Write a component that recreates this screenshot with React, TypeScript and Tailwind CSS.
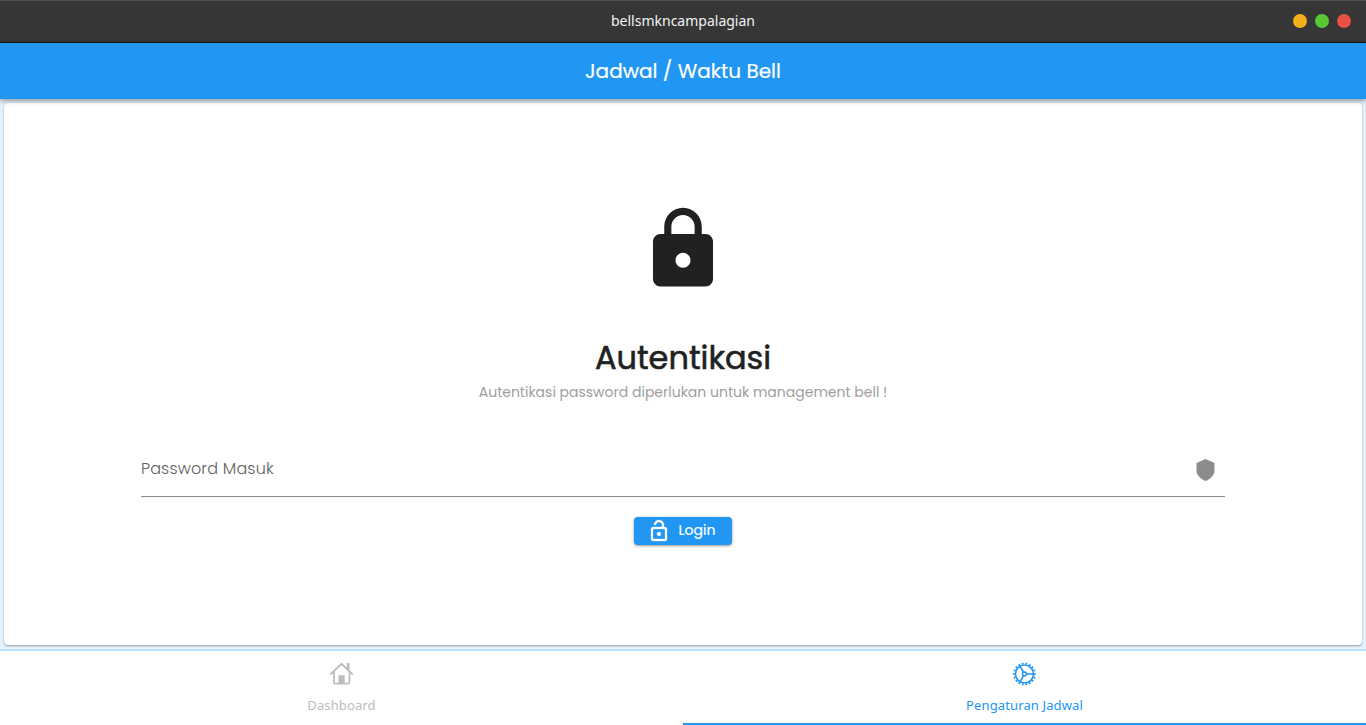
import React from "react";

const poppins = "font-['Poppins','Inter',sans-serif]";
const noto = "font-['Noto_Sans',sans-serif]";

function LockIcon() {
  return (
    <svg viewBox="0 0 24 24" className="size-[90px] fill-[#212121]">
      <path d="M18 8h-1V6c0-2.76-2.24-5-5-5S7 3.24 7 6v2H6c-1.1 0-2 .9-2 2v10c0 1.1.9 2 2 2h12c1.1 0 2-.9 2-2V10c0-1.1-.9-2-2-2zm-6 9c-1.1 0-2-.9-2-2s.9-2 2-2 2 .9 2 2-.9 2-2 2zm3.1-9H8.9V6c0-1.71 1.39-3.1 3.1-3.1 1.71 0 3.1 1.39 3.1 3.1v2z" />
    </svg>
  );
}

function LockOpenIcon() {
  return (
    <svg viewBox="0 0 24 24" className="size-6 fill-white">
      <path d="M12 17c1.1 0 2-.9 2-2s-.9-2-2-2-2 .9-2 2 .9 2 2 2zm6-9h-1V6c0-2.76-2.24-5-5-5S7 3.24 7 6h1.9c0-1.71 1.39-3.1 3.1-3.1 1.71 0 3.1 1.39 3.1 3.1v2H6c-1.1 0-2 .9-2 2v10c0 1.1.9 2 2 2h12c1.1 0 2-.9 2-2V10c0-1.1-.9-2-2-2zm0 12H6V10h12v10z" stroke="white" strokeWidth="0.3" />
    </svg>
  );
}

function ShieldIcon() {
  return (
    <svg viewBox="0 0 24 24" className="size-6 fill-[#8c8c8c]">
      <path d="M12.500 1 3.500 5v7.500c0 4.500 4 8.700 9 10.500 5-1.800 9-6 9-10.500V5z" />
    </svg>
  );
}

function HomeIcon() {
  return (
    <svg viewBox="0 0 24 24" className="size-6" fill="none" stroke="#bdbdbd" strokeWidth="1.8">
      <path d="M.3 12.500 11.500 1.800l11.200 10.700" />
      <path d="M4 10v10.500q0 1.200 1.200 1.200h13.100q1.200 0 1.200-1.200V10" />
      <path d="M18.200 8V1" strokeWidth="2.800" />
      <path d="M8.500 13.300h6.200V22H8.500z" fill="#bdbdbd" stroke="none" />
    </svg>
  );
}

function GearIcon() {
  return (
    <svg viewBox="-11.5 -12 24 24" className="size-6" fill="none" stroke="#2196f3" strokeWidth="1.600">
      <circle r="9" />
      <circle r="10.400" strokeWidth="1.900" pathLength="36" strokeDasharray="1 1" strokeDashoffset="0.500" />
      <circle r="2" strokeWidth="1.500" />
      <path d="M2.300 0H9M-1.150 -2-4.500-7.800M-1.150 2-4.500 7.800" />
    </svg>
  );
}

export default function App() {
  return (
    <div className="flex h-[725px] w-full flex-col overflow-hidden bg-[#e3f2fd]">
      <header className={`${noto} grid h-[43px] shrink-0 grid-cols-[1fr_auto_1fr] items-center border-t border-b border-t-[#505050] border-b-[#101010] bg-[#363636] pb-px`}>
        <span />
        <h1 className="text-[14px] leading-5 text-[#f2f2f2]">bellsmkncampalagian</h1>
        <div className="flex justify-end gap-2 pr-[15px]">
          <i className="size-3.5 rounded-full bg-[#f2ae1c]" />
          <i className="size-3.5 rounded-full bg-[#59c837]" />
          <i className="size-3.5 rounded-full bg-[#e95048]" />
        </div>
      </header>
      <div className="relative z-10 flex h-14 shrink-0 items-center justify-center bg-[#2196f3] shadow-[0_2px_4px_rgba(0,0,0,0.25),0_1px_7px_rgba(0,0,0,0.16)]">
        <h2 className={`${poppins} text-[20px] leading-7 text-white [-webkit-text-stroke:0.2px_white]`}>Jadwal / Waktu Bell</h2>
      </div>
      <main className="flex min-h-0 flex-1 p-1">
        <section className="flex flex-1 flex-col items-center rounded-[4px] bg-white px-[137px] pt-[101px] shadow-[0_1px_2px_rgba(0,0,0,0.35)]">
          <LockIcon />
          <h3 className={`${poppins} mt-[39px] text-[32px] leading-[49px] text-[#212121] [-webkit-text-stroke:0.6px_#212121]`}>Autentikasi</h3>
          <p className={`${poppins} text-[14px] leading-[20px] text-[#9e9e9e]`}>Autentikasi password diperlukan untuk management bell !</p>
          <label className="mt-[41px] flex h-[54px] w-full items-center justify-between border-b border-[#8c8c8c] pr-2">
            <span className={`${poppins} mb-0.5 text-[16px] leading-6 font-light tracking-[0.15px] text-[#5f5f5f]`}>Password Masuk</span>
            <ShieldIcon />
          </label>
          <button className="mt-5 flex h-7 w-[98px] items-center rounded-[4px] bg-[#2196f3] pl-[12.5px] shadow-[0_1px_3px_rgba(0,0,0,0.4)]">
            <LockOpenIcon />
            <span className={`${poppins} mb-0.5 ml-2 text-[14px] leading-5 text-white [-webkit-text-stroke:0.15px_white]`}>Login</span>
          </button>
        </section>
      </main>
      <nav className={`${noto} grid h-[76px] shrink-0 grid-cols-2 border-t-2 border-[#bbdefb] bg-white text-[13px] tracking-[0.12px]`}>
        <div className="flex flex-col items-center pt-[11px] text-[#bdbdbd]">
          <HomeIcon />
          <span className="mt-[9px] leading-5">Dashboard</span>
        </div>
        <div className="flex flex-col items-center border-b-2 border-[#2196f3] pt-[11px] text-[#2196f3]">
          <GearIcon />
          <span className="mt-[9px] leading-5">Pengaturan Jadwal</span>
        </div>
      </nav>
    </div>
  );
}
